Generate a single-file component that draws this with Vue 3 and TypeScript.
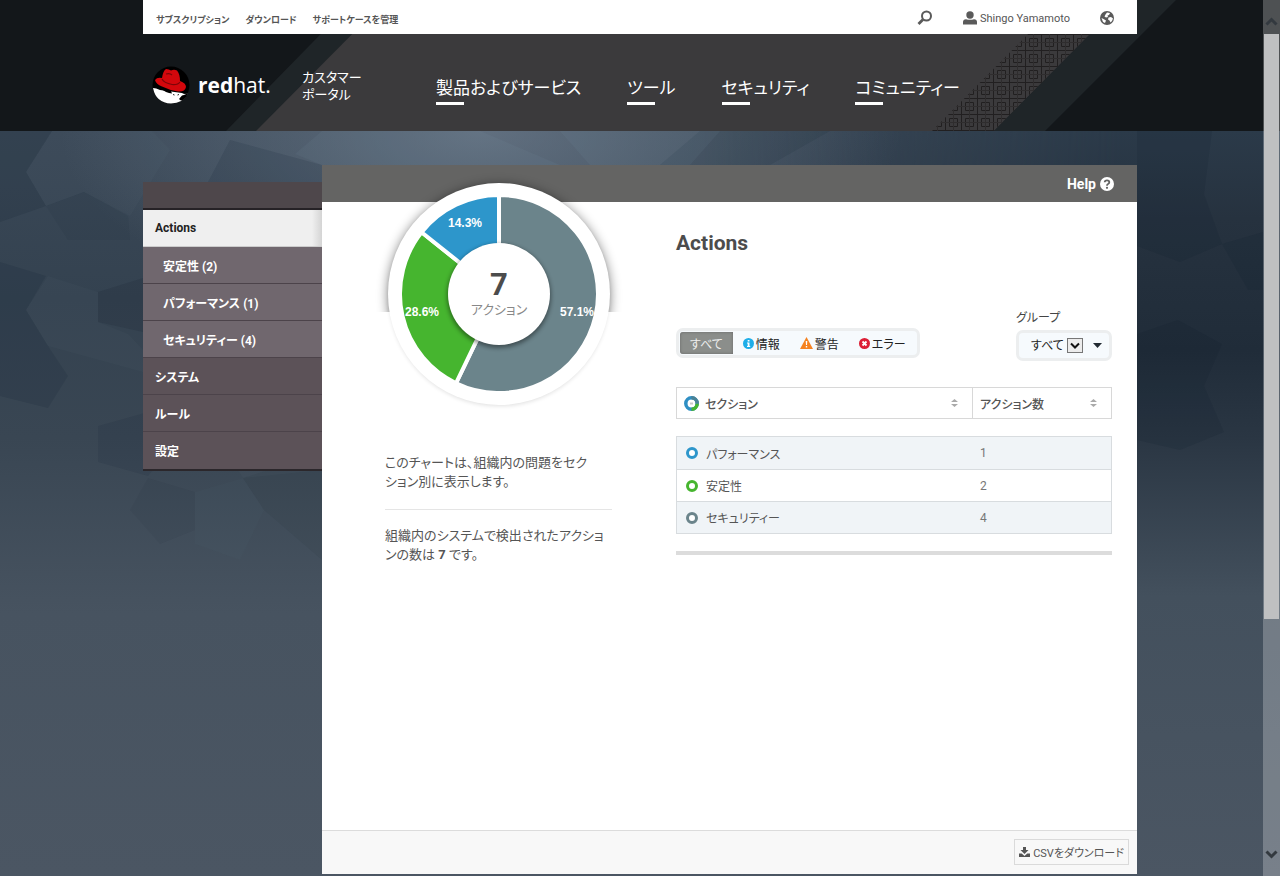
<script setup lang="ts">
import { ref } from 'vue'

interface Slice {
  name: string
  count: number
  percent: string
  color: string
  labelX: number
  labelY: number
}

const slices: Slice[] = [
  { name: 'セキュリティー', count: 4, percent: '57.1%', color: '#6b848b', labelX: 203, labelY: 146 },
  { name: '安定性', count: 2, percent: '28.6%', color: '#46b52f', labelX: 48, labelY: 146 },
  { name: 'パフォーマンス', count: 1, percent: '14.3%', color: '#2d96cb', labelX: 91, labelY: 57 },
]
const total = slices.reduce((sum, s) => sum + s.count, 0)
const rows = [slices[2], slices[1], slices[0]]

const cx = 125
const cy = 124
const radius = 99

function slicePath(index: number): string {
  const before = slices.slice(0, index).reduce((sum, s) => sum + s.count, 0)
  const start = (before / total) * Math.PI * 2
  const end = ((before + slices[index].count) / total) * Math.PI * 2
  const point = (a: number) => `${(cx + radius * Math.sin(a)).toFixed(2)} ${(cy - radius * Math.cos(a)).toFixed(2)}`
  const large = end - start > Math.PI ? 1 : 0
  return `M${cx} ${cy}L${point(start)}A${radius} ${radius} 0 ${large} 1 ${point(end)}Z`
}

const utilityLinks = ['サブスクリプション', 'ダウンロード', 'サポートケースを管理']
const navLinks = ['製品およびサービス', 'ツール', 'セキュリティ', 'コミュニティー']
const menu = [
  { label: 'Actions', kind: 'current' },
  { label: '安定性 (2)', kind: 'sub' },
  { label: 'パフォーマンス (1)', kind: 'sub' },
  { label: 'セキュリティー (4)', kind: 'sub' },
  { label: 'システム', kind: 'top' },
  { label: 'ルール', kind: 'top' },
  { label: '設定', kind: 'top' },
]
const filters = [
  { id: 'all', label: 'すべて' },
  { id: 'info', label: '情報' },
  { id: 'warn', label: '警告' },
  { id: 'error', label: 'エラー' },
]
const activeFilter = ref('all')
const group = ref('all')
</script>

<template>
  <div class="page">
    <svg class="backdrop" viewBox="0 0 1280 876" preserveAspectRatio="xMidYMin slice" aria-hidden="true">
      <defs>
        <linearGradient id="base" x1="0" y1="0" x2="0" y2="1">
          <stop offset=".15" stop-color="#3a4857" />
          <stop offset=".34" stop-color="#344250" />
          <stop offset=".5" stop-color="#394653" />
          <stop offset=".7" stop-color="#475360" />
          <stop offset="1" stop-color="#4b5663" />
        </linearGradient>
        <linearGradient id="right-base" x1="0" y1="0" x2="0" y2="1">
          <stop offset=".15" stop-color="#2b3a49" />
          <stop offset=".25" stop-color="#26323f" />
          <stop offset=".4" stop-color="#202c39" />
          <stop offset=".5" stop-color="#2a3643" />
          <stop offset=".68" stop-color="#43505d" />
          <stop offset="1" stop-color="#4b5663" />
        </linearGradient>
        <radialGradient id="glow" gradientUnits="userSpaceOnUse" cx="0" cy="0" r="1" gradientTransform="translate(480 131) scale(420 190)">
          <stop offset="0" stop-color="#7b8a9b" stop-opacity=".6" />
          <stop offset="1" stop-color="#7b8a9b" stop-opacity="0" />
        </radialGradient>
        <linearGradient id="right-fade">
          <stop offset=".55" stop-color="#fff" stop-opacity="0" />
          <stop offset=".88" stop-color="#fff" />
        </linearGradient>
        <mask id="right-mask"><rect width="1280" height="876" fill="url(#right-fade)" /></mask>
      </defs>
      <rect width="1280" height="876" fill="url(#base)" />
      <rect width="1280" height="876" fill="url(#right-base)" mask="url(#right-mask)" />
      <rect width="1280" height="400" fill="url(#glow)" />
      <g fill="#0c1a2a">
        <path opacity=".14" d="M0 131H52L26 172L46 206L0 222Z" />
        <path opacity=".07" d="M46 206L84 192L128 216L130 240L68 240Z" />
        <path opacity=".12" d="M0 262L46 276L26 310L48 346L68 376L48 408L0 396Z" />
        <path opacity=".13" d="M98 292L143 278V332L98 322Z" />
        <path opacity=".09" d="M98 426L148 412L172 448L148 476L98 462Z" />
        <path opacity=".07" d="M195 470H322V376L260 378L222 444Z" />
        <path opacity=".05" d="M148 478L195 492V530L160 544L130 510Z" />
        <path opacity=".06" d="M243 478L295 462L322 470V560L264 510Z" />
        <path opacity=".12" d="M230 140L322 165V182H208Z" />
        <path opacity=".1" d="M700 131H830L770 165H660Z" />
        <path opacity=".14" d="M1137 131H1212L1204 194L1222 244L1180 262L1137 246Z" />
        <path opacity=".14" d="M1137 334L1178 320L1222 344L1204 386L1224 432L1180 450L1137 440Z" />
        <path opacity=".12" d="M1222 244L1263 232V290H1248Z" />
      </g>
      <g fill="#9fb4c8">
        <path opacity=".03" d="M52 131H152L170 150L130 216L84 192L46 206L26 172Z" />
        <path opacity=".03" d="M48 276L98 292V322L128 334L143 350V372L48 346L26 310Z" />
        <path opacity=".03" d="M222 444L243 478L322 470V400L243 390Z" />
        <path opacity=".02" d="M195 492L243 478L264 510L240 560L195 544Z" />
        <path opacity=".06" d="M322 131H480L560 165H322L295 154Z" />
        <path opacity=".06" d="M560 131H720L690 165H590Z" />
      </g>
    </svg>

    <header class="site-header">
      <svg class="header-art" viewBox="0 0 1280 131" preserveAspectRatio="xMidYMid slice" aria-hidden="true">
        <defs>
          <pattern id="lattice" width="16" height="16" patternUnits="userSpaceOnUse" x="1" y="2">
            <path d="M0 .5H16M.5 0V16M4.500 4.500H12.500V12.500H4.500Z" fill="none" stroke="#211f20" />
            <path d="M8.500 0V16M0 8.500H16" fill="none" stroke="#2f2d2e" />
          </pattern>
        </defs>
        <path d="M354 0H1212L1081 131H226Z" fill="#1f2528" />
        <path d="M386 0H1124L994 131H256Z" fill="#3b3a3c" />
        <path d="M1062 0H1124L994 131H932Z" fill="url(#lattice)" />
        <path d="M1124 0H1176L1045 131H994Z" fill="#1f2528" />
        <path d="M1176 0H1280V131H1045Z" fill="#13171a" />
      </svg>

      <div class="container utility">
        <nav class="utility-links" aria-label="ユーティリティ">
          <a v-for="link in utilityLinks" :key="link" href="#">{{ link }}</a>
        </nav>
        <div class="account">
          <button type="button" class="icon-button" aria-label="検索">
            <svg width="16" height="16" viewBox="0 0 16 16" fill="none" stroke="#5a5a5a">
              <circle cx="9.500" cy="6" r="4.500" stroke-width="2" />
              <path d="M6 9.500L1.500 14" stroke-width="2.800" />
            </svg>
          </button>
          <a href="#" class="user">
            <svg width="14" height="14" viewBox="0 0 14 14" fill="#5a5a5a" aria-hidden="true">
              <circle cx="7" cy="4" r="3.700" />
              <path d="M0 13.500V11Q0 8.500 3 8.200Q7 9.500 11 8.200Q14 8.500 14 11V13.500Z" />
            </svg>
            Shingo Yamamoto
          </a>
          <button type="button" class="icon-button" aria-label="言語">
            <svg width="14" height="14" viewBox="0 0 14 14">
              <circle cx="7" cy="7" r="7" fill="#5a5a5a" />
              <path d="M7 1.500L10 2L9 4L7.500 4.500L8 6L6 6.500L4.500 5.500L5.500 3.500Z M8.500 6.500L11 6L13 7.500L12 10L10.500 11.500L9.500 9.500L8 8.500Z M1.500 7L3.500 8L6 9.500L5 12L3 11Z" fill="#fff" />
            </svg>
          </button>
        </div>
      </div>

      <div class="container masthead">
        <a href="#" class="logo">
          <svg width="38" height="38" viewBox="0 0 38 38" aria-hidden="true">
            <circle cx="19" cy="19" r="18.500" fill="#000" />
            <path d="M1 22Q4 22 8 24L30 27Q33 29 36 27Q31 37.500 19 37.500Q4 37 1 22Z" fill="#fff" />
            <path d="M36.500 25Q34 29 30 29.500L27 33Q29 35 30 34.500Q35 32 36.500 25Z" fill="#000" />
            <path d="M8 22Q14 27 20 27.500L19 25Z" fill="#000" />
            <path d="M21 28.500L22.500 29M25.500 29L27 28.500" stroke="#222" stroke-width="1" />
            <path d="M3 14Q5 11 10 12Q11 5 14 3Q17 3 19 4.500Q22 3 25 4.500Q28 8 28 15Q34 17 34 21Q33 26 26 25.500Q17 24 10 20.500Q4 18 3 14Z" fill="#d3070c" />
            <path d="M10 13Q12 17 20 18.500Q26 19 28 16M14 8Q18 7 20 9" fill="none" stroke="#7d0508" stroke-width="1.200" />
          </svg>
          <span class="wordmark"><b>red</b>hat.</span>
        </a>
        <a href="#" class="portal">カスタマー<br />ポータル</a>
        <nav class="main-nav" aria-label="メイン">
          <a v-for="link in navLinks" :key="link" href="#">{{ link }}</a>
        </nav>
      </div>
    </header>

    <div class="container content">
      <nav class="sidebar" aria-label="セクション">
        <a v-for="item in menu" :key="item.label" href="#" :class="item.kind">{{ item.label }}</a>
      </nav>

      <main class="panel">
        <div class="panel-top">
          <a href="#" class="help">
            Help
            <svg width="14" height="14" viewBox="0 0 14 14" aria-hidden="true">
              <circle cx="7" cy="7" r="7" fill="#fff" />
              <path d="M4.700 5.300Q4.800 3.300 7 3.300Q9.300 3.300 9.300 5.200Q9.300 6.300 8 7Q7 7.500 7 8.700" fill="none" stroke="#646463" stroke-width="1.800" />
              <circle cx="7" cy="10.800" r="1.100" fill="#646463" />
            </svg>
          </a>
        </div>

        <div class="panel-body">
          <section class="summary">
            <svg class="chart" viewBox="0 0 250 250" role="img" aria-label="アクション">
              <defs>
                <clipPath id="shade-area"><rect x="0" y="0" width="250" height="142" /></clipPath>
                <filter id="soft" x="-20%" y="-20%" width="140%" height="140%"><feGaussianBlur stdDeviation="6" /></filter>
                <filter id="faint" x="-20%" y="-20%" width="140%" height="140%"><feGaussianBlur stdDeviation="2" /></filter>
              </defs>
              <g clip-path="url(#shade-area)">
                <circle cx="125" cy="126" r="111" fill="#000" opacity=".5" filter="url(#soft)" />
              </g>
              <circle cx="125" cy="126" r="110" fill="#000" opacity=".12" filter="url(#faint)" />
              <circle cx="125" cy="124" r="111" fill="#fff" />
              <path v-for="(s, i) in slices" :key="s.name" :d="slicePath(i)" :fill="s.color" stroke="#fff" stroke-width="4" />
              <circle cx="125" cy="126" r="52" fill="#000" opacity=".4" filter="url(#faint)" />
              <circle cx="125" cy="124" r="51" fill="#fff" />
              <text v-for="s in slices" :key="s.percent" :x="s.labelX" :y="s.labelY" class="slice-label">{{ s.percent }}</text>
              <text x="125" y="125" class="chart-total">{{ total }}</text>
              <text x="125" y="144" class="chart-unit">アクション</text>
            </svg>
            <div class="notes">
              <p>このチャートは、組織内の問題をセク<br />ション別に表示します。</p>
              <hr />
              <p>組織内のシステムで検出されたアクショ<br />ンの数は <b>{{ total }}</b> です。</p>
            </div>
          </section>

          <section class="details">
            <h1>Actions</h1>
            <div class="controls">
              <div class="filters" role="group" aria-label="重大度">
                <button
                  v-for="f in filters"
                  :key="f.id"
                  type="button"
                  :class="{ active: activeFilter === f.id }"
                  :aria-pressed="activeFilter === f.id"
                  @click="activeFilter = f.id"
                >
                  <svg v-if="f.id === 'info'" width="11" height="11" viewBox="0 0 11 11" aria-hidden="true">
                    <circle cx="5.500" cy="5.500" r="5.500" fill="#1eaee8" />
                    <path d="M4.700 2H6.500V3.500H4.700ZM4 4.500H6.500V8H7.200V9H4V8H4.700V5.500H4Z" fill="#fff" />
                  </svg>
                  <svg v-else-if="f.id === 'warn'" width="13" height="12" viewBox="0 0 13 12" aria-hidden="true">
                    <path d="M6.500 0L13 12H0Z" fill="#f58220" />
                    <path d="M5.700 4H7.300L7 8H6ZM5.800 9H7.200V10.500H5.800Z" fill="#fff" />
                  </svg>
                  <svg v-else-if="f.id === 'error'" width="11" height="11" viewBox="0 0 11 11" aria-hidden="true">
                    <circle cx="5.500" cy="5.500" r="5.500" fill="#dc1f36" />
                    <path d="M3.500 3.500L7.500 7.500M7.500 3.500L3.500 7.500" stroke="#fff" stroke-width="1.800" />
                  </svg>
                  {{ f.label }}
                </button>
              </div>

              <div class="group">
                <label for="group-select">グループ</label>
                <div class="select-box">
                  <select id="group-select" v-model="group">
                    <option value="all">すべて</option>
                  </select>
                  <svg width="16" height="15" viewBox="0 0 16 15" aria-hidden="true">
                    <rect x=".5" y=".5" width="15" height="14" fill="#ececec" stroke="#777" />
                    <path d="M4 5.500L8 9.500L12 5.500" fill="none" stroke="#111" stroke-width="2" />
                  </svg>
                  <svg class="caret" width="9" height="5" viewBox="0 0 9 5" aria-hidden="true"><path d="M0 0H9L4.500 5Z" fill="#222b33" /></svg>
                </div>
              </div>
            </div>

            <table>
              <thead>
                <tr>
                  <th scope="col">
                    <div class="heading">
                      <svg width="15" height="15" viewBox="0 0 15 15" fill="none" stroke-width="3.500" aria-hidden="true">
                        <circle cx="7.500" cy="7.500" r="5.700" stroke="#2f8fc4" />
                        <path d="M13.200 7.500A5.700 5.700 0 0 1 7.500 13.200" stroke="#46b52f" />
                        <path d="M7.500 1.800A5.700 5.700 0 0 1 13.200 7.500" stroke="#4b8295" />
                        <path d="M6 7.500H9" stroke="#c9c9c9" stroke-width="2" />
                      </svg>
                      <span>セクション</span>
                      <svg class="sort" width="7" height="8" viewBox="0 0 7 8" aria-hidden="true"><path d="M0 3L3.500 0L7 3ZM0 5L3.500 8L7 5Z" fill="#aaa" /></svg>
                    </div>
                  </th>
                  <th scope="col">
                    <div class="heading">
                      <span>アクション数</span>
                      <svg class="sort" width="7" height="8" viewBox="0 0 7 8" aria-hidden="true"><path d="M0 3L3.500 0L7 3ZM0 5L3.500 8L7 5Z" fill="#aaa" /></svg>
                    </div>
                  </th>
                </tr>
              </thead>
              <tbody>
                <tr v-for="row in rows" :key="row.name">
                  <td>
                    <div class="section-name">
                      <svg width="12" height="12" viewBox="0 0 12 12" aria-hidden="true"><circle cx="6" cy="6" r="4.500" fill="#fff" :stroke="row.color" stroke-width="3" /></svg>
                      <a href="#">{{ row.name }}</a>
                    </div>
                  </td>
                  <td class="count">{{ row.count }}</td>
                </tr>
              </tbody>
            </table>
            <div class="table-end"></div>
          </section>
        </div>

        <footer class="panel-footer">
          <button type="button" class="download">
            <svg width="11" height="10" viewBox="0 0 11 10" fill="#555" aria-hidden="true">
              <path d="M4 0H7V3H9.500L5.500 7L1.500 3H4ZM0 6.500H2.700L5.500 9L8.300 6.500H11V10H0Z" />
            </svg>
            CSVをダウンロード
          </button>
        </footer>
      </main>
    </div>

    <div class="scrollbar" aria-hidden="true">
      <div class="arrow"><svg width="13" height="9" viewBox="0 0 13 9"><path d="M1.500 7.500L6.500 2.500L11.500 7.500" /></svg></div>
      <div class="thumb"></div>
      <div class="track"></div>
      <div class="arrow"><svg width="13" height="9" viewBox="0 0 13 9"><path d="M1.500 1.500L6.500 6.500L11.500 1.500" /></svg></div>
    </div>
  </div>
</template>

<style>
body {
  margin: 0;
}
</style>

<style scoped>
.page,
.page * {
  box-sizing: border-box;
}

.page {
  position: relative;
  display: flex;
  flex-direction: column;
  min-height: 100vh;
  overflow: hidden;
  font-family: Roboto, "Noto Sans CJK JP", sans-serif;
  font-feature-settings: "palt";
  font-size: 12px;
  color: #555;
  background: #4b5663;
}

.page button,
.page select {
  font: inherit;
  font-feature-settings: inherit;
  color: inherit;
  margin: 0;
}

a {
  color: inherit;
  text-decoration: none;
}

svg {
  display: block;
  flex: none;
}

.backdrop {
  position: absolute;
  inset: 0;
  width: 100%;
  height: 100%;
}

.container {
  position: relative;
  width: calc(100% - 286px);
  max-width: 994px;
  min-width: 960px;
  margin: 0 auto;
}

.site-header {
  position: relative;
  background: #13171a;
}

.header-art {
  position: absolute;
  inset: 0;
  width: 100%;
  height: 100%;
}

.utility {
  display: flex;
  align-items: center;
  justify-content: space-between;
  height: 34px;
  padding: 0 23px 0 13px;
  background: #fff;
}

.utility-links {
  display: flex;
  gap: 16px;
  padding-top: 4px;
  font-size: 9px;
  font-weight: 700;
}

.account {
  display: flex;
  align-items: center;
  gap: 30px;
  padding-top: 2px;
}

.icon-button {
  padding: 0;
  border: 0;
  background: none;
}

.user {
  display: flex;
  align-items: center;
  gap: 3px;
  font-size: 11px;
}

.masthead {
  display: flex;
  align-items: center;
  height: 97px;
  padding: 0 9px;
  color: #fff;
}

.logo {
  display: flex;
  align-items: center;
  gap: 8px;
  width: 150px;
  padding-top: 4px;
}

.wordmark {
  font-family: "Open Sans", sans-serif;
  font-size: 21px;
  line-height: 30px;
}

.portal {
  width: 134px;
  padding-top: 6px;
  font-size: 13px;
  line-height: 17px;
}

.main-nav {
  display: flex;
  gap: 46px;
  padding-top: 15px;
  font-size: 17px;
  line-height: 24px;
}

.main-nav a {
  white-space: nowrap;
}

.main-nav a::after {
  content: "";
  display: block;
  width: 28px;
  height: 3px;
  margin-top: 2px;
  background: #fff;
}

.content {
  display: flex;
  flex: 1;
  align-items: flex-start;
  padding: 34px 0 2px;
}

.sidebar {
  flex: none;
  width: 179px;
  margin-top: 17px;
  padding-top: 26px;
  border-bottom: 2px solid #2b272b;
  background: #4e474b;
  color: #fff;
  font-weight: 700;
}

.sidebar a {
  display: flex;
  align-items: center;
  height: 37px;
  padding-left: 12px;
  border-bottom: 1px solid #4c434a;
  background: #5c5258;
}

.sidebar .current {
  height: 39px;
  border-top: 2px solid #262226;
  border-bottom-color: #ccc;
  background: linear-gradient(to left, #d4d4d4, #efefef 10px);
  color: #222;
}

.sidebar .sub {
  padding-left: 20px;
  background: #70676e;
}

.sidebar a:last-child {
  border-bottom: 0;
}

.panel {
  display: flex;
  flex: 1;
  flex-direction: column;
  align-self: stretch;
  background: #fff;
}

.panel-top {
  display: flex;
  align-items: center;
  justify-content: flex-end;
  height: 37px;
  padding: 0 23px;
  background: #646463;
}

.help {
  display: flex;
  align-items: center;
  gap: 4px;
  color: #fff;
  font-size: 14px;
  font-weight: 700;
}

.panel-body {
  display: grid;
  flex: 1;
  grid-template-columns: 250px 1fr;
  gap: 52px;
  align-items: start;
  padding: 0 25px 0 52px;
}

.chart {
  position: relative;
  width: 250px;
  height: 250px;
  margin-top: -32px;
  overflow: visible;
}

.chart text {
  text-anchor: middle;
}

.slice-label {
  fill: #fff;
  font-family: "Liberation Sans", sans-serif;
  font-size: 12px;
  font-weight: 700;
}

.chart-total {
  fill: #4c4c4c;
  font-size: 31px;
  font-weight: 700;
}

.chart-unit {
  fill: #888;
  font-size: 13px;
}

.notes {
  padding: 33px 12px 0 11px;
  font-size: 13px;
  line-height: 19px;
  white-space: nowrap;
}

.notes p {
  margin: 0;
}

.notes hr {
  height: 1px;
  margin: 18px 0 16px;
  border: 0;
  background: #e5e5e5;
}

h1 {
  margin: 28px 0 0;
  font-size: 21px;
  line-height: 26px;
  color: #4c4c4c;
}

.controls {
  display: flex;
  align-items: flex-end;
  justify-content: space-between;
  margin-top: 54px;
}

.filters {
  display: flex;
  margin-bottom: 3px;
  padding: 1px;
  border: 3px solid #eceeef;
  border-radius: 7px;
  background: #f6fafd;
  color: #222;
}

.filters button {
  display: flex;
  align-items: center;
  gap: 2px;
  height: 22px;
  padding: 0 10px;
  border: 0;
  background: none;
  white-space: nowrap;
}

.filters .active {
  border-radius: 3px 0 0 3px;
  background: #8b8e8b;
  box-shadow: inset 0 0 3px #666;
  color: #eee;
}

.group label {
  display: block;
  margin-bottom: 3px;
  line-height: 17px;
  color: #444;
}

.select-box {
  display: flex;
  align-items: center;
  height: 31px;
  padding: 0 7px 0 12px;
  border: 3px solid #eceeef;
  border-radius: 7px;
  background: #f6fafd;
}

.select-box select {
  width: 36px;
  padding: 0;
  border: 0;
  background: none;
  appearance: none;
  color: #222;
}

.caret {
  margin-left: 10px;
}

table {
  width: 100%;
  margin-top: 26px;
  border-spacing: 0;
  table-layout: fixed;
}

th {
  height: 32px;
  padding: 0 14px 0 7px;
  border: 1px solid #d8d8d8;
  font-weight: 500;
  text-align: left;
}

th:last-child {
  width: 139px;
  border-left: 0;
}

.heading,
.section-name {
  display: flex;
  align-items: center;
  gap: 6px;
}

.sort {
  margin-left: auto;
}

tbody::before {
  content: "";
  display: block;
  height: 17px;
}

td {
  height: 32px;
  padding: 0 7px 0 9px;
  border-bottom: 1px solid #d8dcdf;
}

td:first-child {
  border-left: 1px solid #d8dcdf;
}

td:last-child {
  border-right: 1px solid #d8dcdf;
}

tbody tr:first-child td {
  height: 34px;
  border-top: 1px solid #d8dcdf;
}

tbody tr:nth-child(odd) td {
  background: #f0f4f7;
}

.section-name {
  gap: 8px;
}

td.count {
  padding-left: 7px;
  color: #777;
}

.table-end {
  height: 4px;
  margin-top: 17px;
  background: #dcdcdc;
}

.panel-footer {
  display: flex;
  justify-content: flex-end;
  padding: 8px 8px 9px;
  border-top: 1px solid #dcdcdc;
  background: #f8f8f8;
}

.page .download {
  display: flex;
  align-items: center;
  gap: 3px;
  height: 26px;
  padding: 0 4px;
  border: 1px solid #dadada;
  background: #f8f8f8;
  font-size: 11px;
}

.scrollbar {
  position: absolute;
  top: 0;
  right: 0;
  bottom: 0;
  display: flex;
  flex-direction: column;
  width: 17px;
  padding: 0 1px;
  background: rgba(255, 255, 255, 0.25);
}

.thumb {
  flex: 585;
  background: #bfc0c1;
}

.track {
  flex: 223;
}

.arrow {
  display: flex;
  align-items: center;
  justify-content: center;
  height: 34px;
  padding-top: 9px;
}

.arrow:last-child {
  padding: 0 0 9px;
}

.arrow path {
  fill: none;
  stroke: #33393f;
  stroke-width: 3;
}
</style>
